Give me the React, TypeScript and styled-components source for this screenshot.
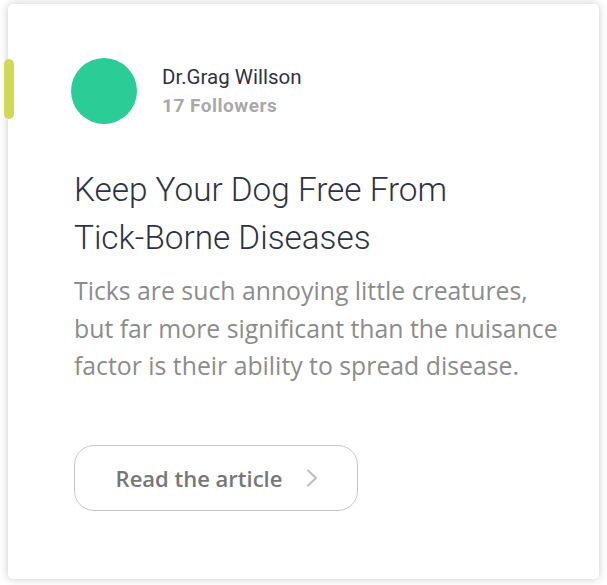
import React from "react";
import styled, { createGlobalStyle } from "styled-components";

const GlobalStyle = createGlobalStyle`
  html, body {
    margin: 0;
    padding: 0;
    background: #ffffff;
  }
  * { box-sizing: border-box; }
`;

const Page = styled.div`
  padding: 4px 8px 6px 8px;
  width: 607px;
`;

const Card = styled.article`
  position: relative;
  width: 591px;
  height: 575px;
  background: #ffffff;
  border-radius: 5px;
  box-shadow: 0 0 9px rgba(0, 0, 0, 0.22);
  padding: 54px 30px 0 63px;
  display: flex;
  flex-direction: column;
`;

const Accent = styled.span`
  position: absolute;
  left: -4px;
  top: 55px;
  width: 10px;
  height: 60px;
  border-radius: 5px;
  background: #d0d955;
`;

const Author = styled.header`
  display: flex;
  align-items: center;
  gap: 25px;
`;

const Avatar = styled.div`
  width: 66px;
  height: 66px;
  border-radius: 50%;
  background: #29cd95;
  flex: none;
`;

const AuthorInfo = styled.div`
  display: flex;
  flex-direction: column;
  gap: 6px;
`;

const Name = styled.span`
  font-family: Roboto, "Liberation Sans", sans-serif;
  font-size: 20.5px;
  font-weight: 400;
  color: #2d3346;
  line-height: 24px;
`;

const Followers = styled.span`
  font-family: Roboto, "Liberation Sans", sans-serif;
  font-size: 19px;
  letter-spacing: 0.5px;
  font-weight: 700;
  color: #a9a9a9;
  line-height: 22px;
`;

const Title = styled.h1`
  margin: 42px 0 0 3px;
  font-family: Roboto, "Liberation Sans", sans-serif;
  font-weight: 300;
  font-size: 33.3px;
  line-height: 48px;
  color: #2d3346;
`;

const Excerpt = styled.p`
  margin: 10px 0 0 3px;
  font-family: "Open Sans", "Liberation Sans", sans-serif;
  font-size: 24.8px;
  line-height: 37.5px;
  color: #8c8c8c;
  white-space: nowrap;
`;

const ReadButton = styled.button`
  margin: 60px 0 0 3px;
  width: 284px;
  height: 66px;
  border: 1px solid #c6c6c6;
  border-radius: 20px;
  background: #ffffff;
  display: flex;
  align-items: center;
  justify-content: center;
  gap: 24px;
  padding: 0 0 0 2px;
  font-family: "Open Sans", "Liberation Sans", sans-serif;
  font-size: 22px;
  font-weight: 600;
  color: #777777;
  cursor: pointer;
`;

const Chevron = () => (
  <svg width="12" height="18" viewBox="0 0 12 18" fill="none">
    <path d="M2 1.5 L10 9 L2 16.5" stroke="#bdbdbd" strokeWidth="2" strokeLinecap="round" strokeLinejoin="round" />
  </svg>
);

export default function App() {
  return (
    <>
      <GlobalStyle />
      <Page>
        <Card>
          <Accent />
          <Author>
            <Avatar />
            <AuthorInfo>
              <Name>Dr.Grag Willson</Name>
              <Followers>17 Followers</Followers>
            </AuthorInfo>
          </Author>
          <Title>
            Keep Your Dog Free From
            <br />
            Tick-Borne Diseases
          </Title>
          <Excerpt>
            Ticks are such annoying little creatures,
            <br />
            but far more significant than the nuisance
            <br />
            factor is their ability to spread disease.
          </Excerpt>
          <ReadButton>
            <span>Read the article</span>
            <Chevron />
          </ReadButton>
        </Card>
      </Page>
    </>
  );
}
